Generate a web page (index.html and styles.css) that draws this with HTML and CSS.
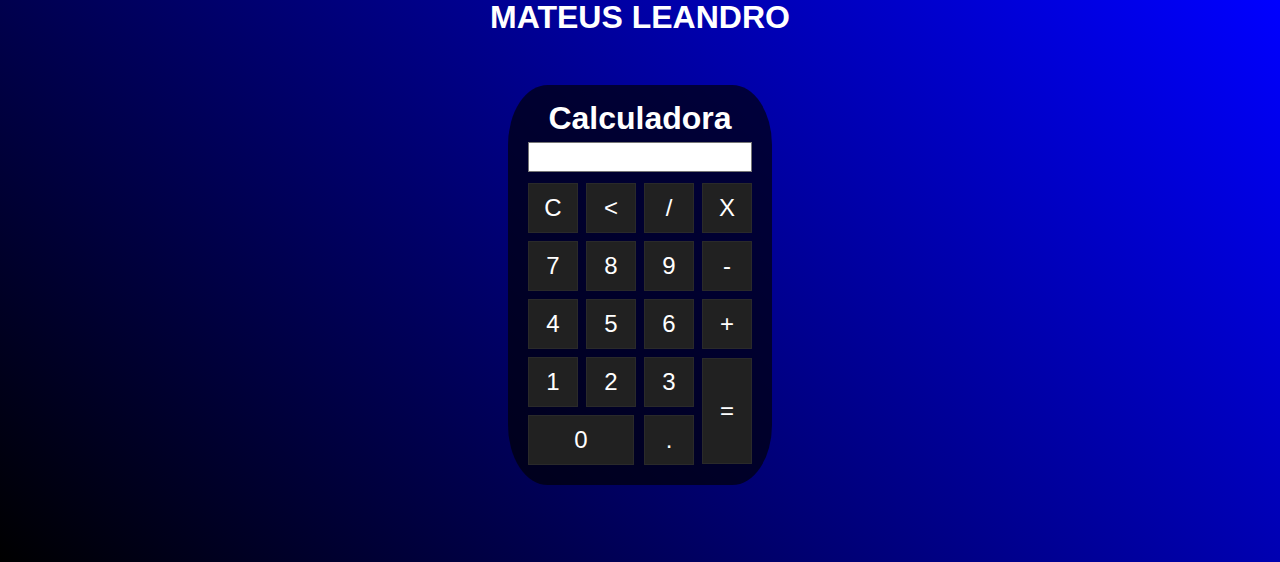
FILE: index.html
```html
<!DOCTYPE html>
<html lang="pt-BR">
<head>
<meta charset="utf-8">
<title>Calculadora</title>
<link rel="stylesheet" href="styles.css">
</head>
<body>
<h1 class="author">MATEUS LEANDRO</h1>
<main class="calc">
  <h2 class="calc-title">Calculadora</h2>
  <input class="display" type="text" readonly>
  <div class="keys">
    <button class="key">C</button>
    <button class="key">&lt;</button>
    <button class="key">/</button>
    <button class="key">X</button>
    <button class="key">7</button>
    <button class="key">8</button>
    <button class="key">9</button>
    <button class="key">-</button>
    <button class="key">4</button>
    <button class="key">5</button>
    <button class="key">6</button>
    <button class="key">+</button>
    <button class="key">1</button>
    <button class="key">2</button>
    <button class="key">3</button>
    <button class="key key-equals">=</button>
    <button class="key key-zero">0</button>
    <button class="key">.</button>
  </div>
</main>
</body>
</html>
```
FILE: styles.css
```css
html {
  height: 100%;
}
body {
  margin: 0;
  min-height: 100%;
  background: linear-gradient(45deg, #000000, #0000ff);
  font-family: "Liberation Sans", Arial, sans-serif;
  color: #ffffff;
  display: flex;
  flex-direction: column;
  align-items: center;
}
.author {
  margin: -1px 0 0;
  font-size: 32px;
  font-weight: bold;
  line-height: 37px;
  text-align: center;
}
.calc {
  margin-top: 49px;
  width: 224px;
  padding: 15px 20px 20px;
  background: rgba(0, 0, 0, 0.65);
  border-radius: 15%;
  display: flex;
  flex-direction: column;
}
.calc-title {
  margin: 0;
  font-size: 32px;
  font-weight: bold;
  line-height: 37px;
  text-align: center;
}
.display {
  margin: 5px 0 0;
  box-sizing: border-box;
  width: 224px;
  height: 30px;
  border: 1px solid #767676;
  background: #ffffff;
  padding: 0 4px;
  font-family: "Liberation Sans", Arial, sans-serif;
  font-size: 18px;
}
.keys {
  margin-top: 11px;
  display: grid;
  grid-template-columns: repeat(4, 50px);
  grid-auto-rows: 50px;
  gap: 8px;
}
.key {
  box-sizing: border-box;
  width: 50px;
  height: 50px;
  margin: 0;
  padding: 0;
  background: #212121;
  border: 1px solid #2a2a2a;
  color: #ffffff;
  font-family: "Liberation Sans", Arial, sans-serif;
  font-size: 24px;
  cursor: pointer;
}
.key-equals {
  grid-row: span 2;
  height: 106px;
  margin-top: 1px;
}
.key-zero {
  grid-column: span 2;
  width: 106px;
}
```
